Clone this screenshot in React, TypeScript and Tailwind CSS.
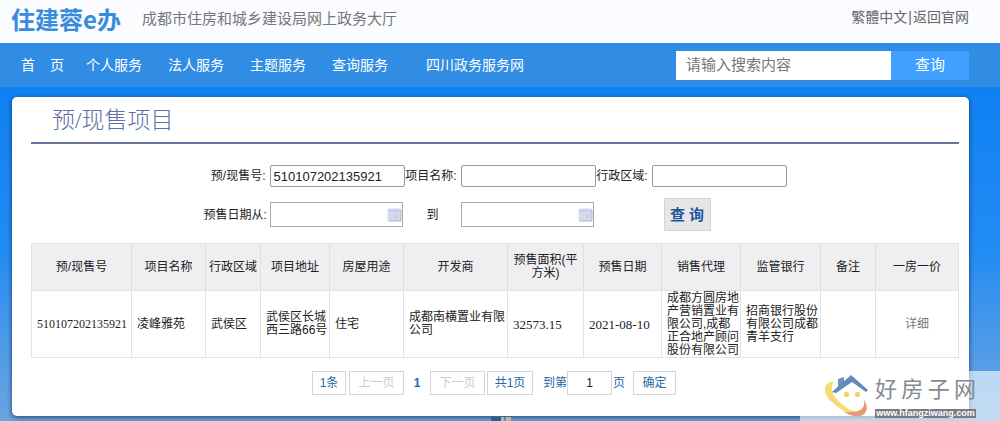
import type { ReactNode } from "react";

const navItems = ["个人服务", "法人服务", "主题服务", "查询服务"];

const columns = [
  { label: "预/现售号", width: "w-[100px]" },
  { label: "项目名称", width: "w-[74px]" },
  { label: "行政区域", width: "w-[55px]" },
  { label: "项目地址", width: "w-[69px]" },
  { label: "房屋用途", width: "w-[74px]" },
  { label: "开发商", width: "w-[104px]" },
  { label: "预售面积(平方米)", width: "w-[76px]" },
  { label: "预售日期", width: "w-[78px]" },
  { label: "销售代理", width: "w-[79px]" },
  { label: "监管银行", width: "w-[80px]" },
  { label: "备注", width: "w-[55px]" },
  { label: "一房一价", width: "w-[83px]" },
];

function Header() {
  return (
    <header className="flex h-[43px] items-start bg-[#fafcff] pr-[31px] pl-[11px]">
      <h1 className="mt-[2px] font-['Noto_Sans_CJK_SC',sans-serif] text-[24px] leading-[34px] font-bold text-[#3a8bdb]">住建蓉e办</h1>
      <p className="mt-[7px] ml-[21px] text-[15px] leading-6 text-[#777]">成都市住房和城乡建设局网上政务大厅</p>
      <div className="mt-[7px] ml-auto flex gap-px text-[14px] leading-5 text-[#666]">
        <a href="#traditional">繁體中文</a>
        <span>|</span>
        <a href="#official">返回官网</a>
      </div>
    </header>
  );
}

function NavBar() {
  return (
    <nav className="flex h-11 items-center bg-[#308de3] pr-[31px] pl-[21px] text-[14px] text-white">
      <a href="#home" className="mr-[22px] flex gap-[15px]">
        <span>首</span>
        <span>页</span>
      </a>
      <div className="flex gap-[26px]">
        {navItems.map(item => (
          <a key={item} href="#service">{item}</a>
        ))}
        <a href="#sichuan" className="ml-3">四川政务服务网</a>
      </div>
      <form className="ml-auto flex h-[29px]">
        <input
          type="text"
          aria-label="搜索"
          placeholder="请输入搜索内容"
          className="w-[215px] bg-white px-[10px] text-[15px] text-[#555] outline-none placeholder:text-[#777]"
        />
        <button type="button" className="w-[78px] bg-[#409fff] text-[15px]">查询</button>
      </form>
    </nav>
  );
}

function CalendarIcon() {
  return (
    <svg width="15" height="14" viewBox="0 0 15 14" className="shrink-0">
      <rect x="1" y="1" width="13.5" height="12.5" rx="1.5" fill="#aab5cf" />
      <rect x="0.5" y="0.5" width="13" height="12" rx="1.5" fill="#d5dcee" />
      <path d="M1 1.500h12v2.500H1z" fill="#c3d0ec" />
      <path d="M3 6.500h8M3 10.500h8" stroke="#cdd3e4" />
      <path d="M8 6h4v4H8z" fill="#e3c9d2" />
    </svg>
  );
}

function DateField({ id, label }: { id: string; label: string }) {
  return (
    <div className="flex h-[25px] w-[133px] items-center border border-[#aaa]">
      <input id={id} aria-label={label} type="text" className="w-full min-w-0 px-1 text-[13px] outline-none" />
      <CalendarIcon />
    </div>
  );
}

function SearchForm() {
  const label = "pr-1 text-right whitespace-nowrap";
  const box = "h-[22px] w-[135px] rounded-[2px] border border-[#999] px-[3px] text-[13px] outline-none";
  return (
    <form className="mt-[21px] grid grid-cols-[66px_135px_56px_135px_56px_135px] items-center justify-center text-xs text-[#222]">
      <label htmlFor="permit" className={label}>预/现售号:</label>
      <input id="permit" type="text" defaultValue="510107202135921" className={box} />
      <label htmlFor="project" className={label}>项目名称:</label>
      <input id="project" type="text" className={box} />
      <label htmlFor="district" className={label}>行政区域:</label>
      <input id="district" type="text" className={box} />

      <label htmlFor="from" className={`mt-[11px] ${label}`}>预售日期从:</label>
      <div className="mt-[11px]">
        <DateField id="from" label="预售日期从" />
      </div>
      <label htmlFor="to" className="mt-[11px] text-center">到</label>
      <div className="mt-[11px]">
        <DateField id="to" label="到" />
      </div>
      <div className="col-start-6 mt-[11px] pl-3">
        <button type="button" className="h-[33px] w-[47px] border border-[#d5d5d8] bg-[#e6e6e9] text-[15px] font-bold text-[#1e5799]">
          查 询
        </button>
      </div>
    </form>
  );
}

function Cell({ children, className = "" }: { children?: ReactNode; className?: string }) {
  return <td className={`border border-[#e3e3e6] pl-[5px] ${className}`}>{children}</td>;
}

function ResultTable() {
  const serif = "font-['Liberation_Serif',serif]";
  return (
    <table className="mt-3 w-full table-fixed border-collapse text-xs leading-[13px] text-[#222]">
      <thead>
        <tr className="h-[47px] bg-[#efeff2]">
          {columns.map(col => (
            <th key={col.label} className={`border border-[#e0e0e3] font-normal ${col.width}`}>{col.label}</th>
          ))}
        </tr>
      </thead>
      <tbody>
        <tr className="h-[67px]">
          <Cell className={serif}>510107202135921</Cell>
          <Cell>凌峰雅苑</Cell>
          <Cell>武侯区</Cell>
          <Cell>武侯区长城西三路66号</Cell>
          <Cell>住宅</Cell>
          <Cell>成都南横置业有限公司</Cell>
          <Cell className={`text-[13px] ${serif}`}>32573.15</Cell>
          <Cell className={`text-[13px] ${serif}`}>2021-08-10</Cell>
          <Cell>成都方圆房地产营销置业有限公司,成都正合地产顾问股份有限公司</Cell>
          <Cell>招商银行股份有限公司成都青羊支行</Cell>
          <Cell />
          <Cell className="pr-[5px] text-center">
            <a href="#detail" className="text-[#777]">详细</a>
          </Cell>
        </tr>
      </tbody>
    </table>
  );
}

function Pagination() {
  const box = "flex h-6 items-center justify-center border border-[#d5d5d8]";
  return (
    <div className="mt-[13px] flex items-center justify-center pr-[2px] text-xs text-[#2568a6]">
      <span className={`w-[34px] ${box}`}>1条</span>
      <button type="button" disabled className={`ml-[3px] w-[55px] text-[#ccc] ${box}`}>上一页</button>
      <span className="w-[26px] text-center font-bold">1</span>
      <button type="button" disabled className={`w-[55px] text-[#ccc] ${box}`}>下一页</button>
      <span className={`ml-[2px] w-[46px] ${box}`}>共1页</span>
      <label htmlFor="page" className="ml-[10px]">到第</label>
      <input id="page" type="text" defaultValue="1" className="h-6 w-[45px] border border-[#d5d5d8] text-center text-[#222] outline-none" />
      <span className="ml-px">页</span>
      <button type="button" className={`ml-2 w-[43px] ${box}`}>确定</button>
    </div>
  );
}

function Watermark() {
  return (
    <div className="absolute right-0 bottom-0 flex h-[50px] w-[200px] bg-white/60 pl-[24px]">
      <svg width="46" height="46" viewBox="0 0 46 46" className="mt-[3px] shrink-0">
        <path d="M10 7C-2 9-2 20 9 29c9 8 20 15 29 12 4-2 5-5 4-9-3 7-12 7-20 1C11 26 4 15 10 7z" fill="#f4dd74" />
        <path d="M20 38c8 5 17 6 21 1 3-4 2-9-1-13 2 11-8 13-20 12z" fill="#ea9678" />
        <path d="M14 5l6-2v5l-6 5z" fill="#7190bc" />
        <path d="M8 18L27 1l17 15-2 2L28 8 12 19z" fill="#6589bb" />
        <path d="M14 19L28 9l13 10-2 10H22z" fill="#fff" fillOpacity="0.7" />
        <rect x="20" y="18" width="5" height="5" rx="2" fill="#f1cf65" />
        <rect x="31" y="18" width="5" height="5" rx="2" fill="#f1cf65" />
      </svg>
      <div className="mt-[5px] ml-[5px] w-[101px]">
        <div className="flex justify-between text-[22px] leading-[28px] text-[#858a90]">
          <span>好</span>
          <span>房</span>
          <span>子</span>
          <span>网</span>
        </div>
        <div className="mt-[5px] flex h-[9px] items-center justify-center bg-[#777c83] text-[9px] leading-none font-bold text-white">
          www.hfangziwang.com
        </div>
      </div>
    </div>
  );
}

export default function App() {
  return (
    <div className="relative flex min-h-screen flex-col bg-white font-['Liberation_Sans','Noto_Sans_CJK_SC',sans-serif]">
      <Header />
      <NavBar />
      <div className="flex-1 bg-linear-to-b from-[#0f80f4] via-[#218cf3] to-[#6aa5de] pt-[10px] pr-[31px] pl-3">
        <main className="rounded-[5px] bg-white pr-[10px] pb-[21px] pl-[19px] shadow-[0_1px_5px_#1d3b63]">
          <h2 className="h-[47px] border-b-2 border-[#66719f] pl-[21px] font-['Liberation_Serif','Noto_Sans_CJK_SC',serif] text-[23px] leading-[47px] font-light text-[#5f6ea5]">
            预/现售项目
          </h2>
          <SearchForm />
          <ResultTable />
          <Pagination />
        </main>
        <svg width="24" height="5" viewBox="0 0 24 5" className="ml-[50%] block">
          <path d="M0 1h10v4H0z" fill="#2d5f8e" />
          <path d="M10 1h3v4h-3zM15 1h5v4h-5z" fill="#b9b7a0" />
        </svg>
      </div>
      <Watermark />
    </div>
  );
}
